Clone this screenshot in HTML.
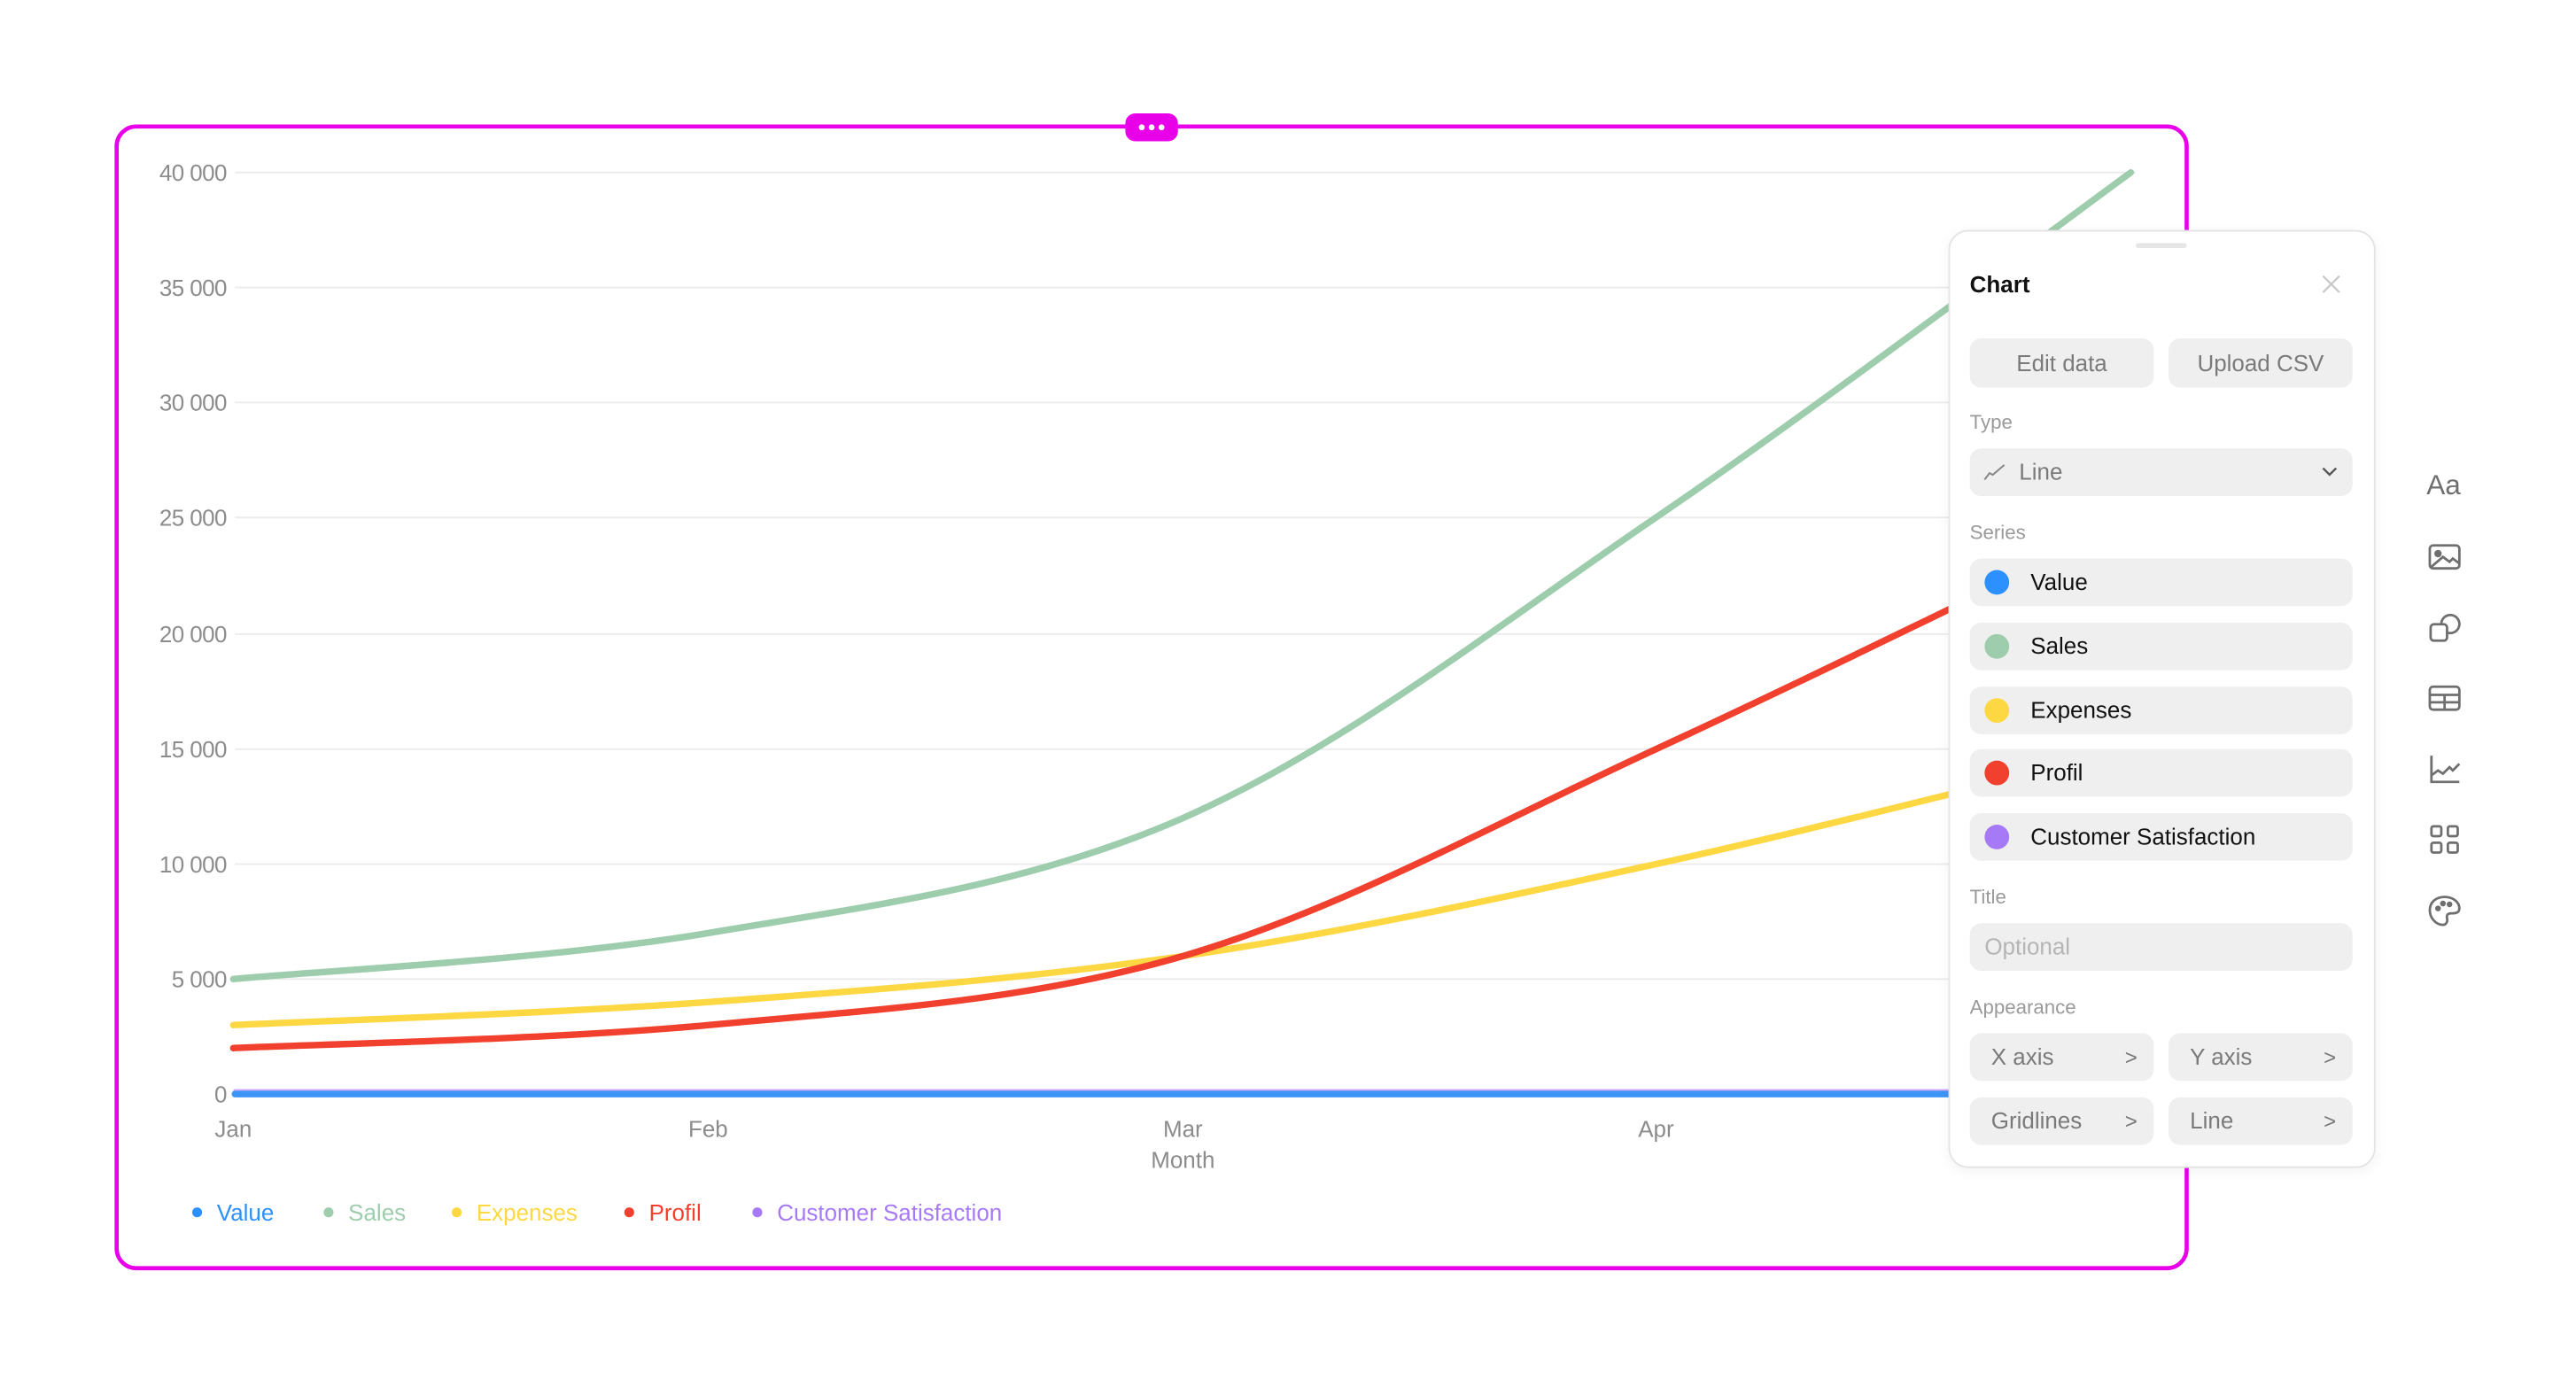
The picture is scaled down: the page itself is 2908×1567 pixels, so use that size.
<!DOCTYPE html>
<html><head><meta charset="utf-8"><style>
html,body{margin:0;padding:0;background:#fff;overflow:hidden}
body{width:2908px;height:1566px}
#w{position:absolute;left:0;top:0;width:1568px;height:845px;transform:scale(1.8546,1.8546);transform-origin:0 0;font-family:"Liberation Sans",sans-serif}
.a{position:absolute}
.yl{position:absolute;right:1430px;font-size:14px;color:#8c8c8c;line-height:16px;letter-spacing:-0.3px}
.xl{position:absolute;font-size:14px;color:#8c8c8c;transform:translateX(-50%)}
.lg{position:absolute;top:730px;font-size:14px}
.lg i{display:inline-block;width:6px;height:6px;border-radius:50%;margin-right:9px;vertical-align:2px}
.btn{position:absolute;background:#efefef;border-radius:7px;height:30px;line-height:30px;font-size:14px;color:#7a7a7a}
.lab{position:absolute;left:1199px;font-size:12px;color:#9a9a9a}
.row{position:absolute;left:1199px;width:233px;height:29px;background:#efefef;border-radius:7px;font-size:14px;color:#111;line-height:29px}
.row i{position:absolute;left:9px;top:7px;width:15px;height:15px;border-radius:50%}
.row span{position:absolute;left:37px}
.chev{position:absolute;right:10px;top:0;font-size:13px;color:#777}
.ic{position:absolute;left:1478px;width:20px;height:20px}
</style></head><body><div id="w">
<svg class="a" style="left:0;top:0" width="1568" height="845">
<g stroke="#ebebeb" stroke-width="1">
<line x1="143" y1="105" x2="1300" y2="105"/><line x1="143" y1="175" x2="1300" y2="175"/><line x1="143" y1="245" x2="1300" y2="245"/><line x1="143" y1="315" x2="1300" y2="315"/><line x1="143" y1="386" x2="1300" y2="386"/><line x1="143" y1="456" x2="1300" y2="456"/><line x1="143" y1="526" x2="1300" y2="526"/><line x1="143" y1="596" x2="1300" y2="596"/>
</g>
<g fill="none" stroke-width="4" stroke-linecap="round">
<path stroke="#9dcdad" d="M142,596 C190,591.3 334.7,584.3 431,568 C527.3,551.7 623.8,540.2 720,498 C816.2,455.8 911.8,380.5 1008,315 C1104.2,249.5 1248.8,140 1297,105"/>
<path stroke="#fdd843" d="M142,624 C190,621.7 334.7,617 431,610 C527.3,603 623.8,596 720,582 C816.2,568 911.8,547 1008,526 C1104.2,505 1248.8,467.7 1297,456"/>
<path stroke="#f2402f" d="M142,638 C190,635.7 334.7,633 431,624 C527.3,615 623.8,610 720,582 C816.2,554 911.8,500.2 1008,456 C1104.2,411.8 1248.8,340.2 1297,317"/>
<line stroke="#c9a8f7" x1="143" y1="664" x2="1297" y2="664" stroke-width="2"/>
<line stroke="#3d95f7" x1="143" y1="666" x2="1297" y2="666"/>
</g>
<rect x="71" y="77" width="1260" height="695" rx="12" fill="none" stroke="#e800e8" stroke-width="2.5"/>
<rect x="685" y="69" width="32" height="17" rx="6" fill="#e800e8"/>
<circle cx="695" cy="77.5" r="1.8" fill="#fff"/><circle cx="701" cy="77.5" r="1.8" fill="#fff"/><circle cx="707" cy="77.5" r="1.8" fill="#fff"/>
</svg>
<div class="yl" style="top:97px">40 000</div><div class="yl" style="top:167px">35 000</div><div class="yl" style="top:237px">30 000</div><div class="yl" style="top:307px">25 000</div><div class="yl" style="top:378px">20 000</div><div class="yl" style="top:448px">15 000</div><div class="yl" style="top:518px">10 000</div><div class="yl" style="top:588px">5 000</div><div class="yl" style="top:658px">0</div>
<div class="xl" style="left:142px;top:679px">Jan</div><div class="xl" style="left:431px;top:679px">Feb</div><div class="xl" style="left:720px;top:679px">Mar</div><div class="xl" style="left:1008px;top:679px">Apr</div><div class="xl" style="left:720px;top:698px">Month</div>
<div class="lg" style="left:117px;color:#2d90ff"><i style="background:#2d90ff"></i>Value</div>
<div class="lg" style="left:197px;color:#9dcdad"><i style="background:#9dcdad"></i>Sales</div>
<div class="lg" style="left:275px;color:#fdd843"><i style="background:#fdd843"></i>Expenses</div>
<div class="lg" style="left:380px;color:#f2402f"><i style="background:#f2402f"></i>Profil</div>
<div class="lg" style="left:458px;color:#a679f7"><i style="background:#a679f7"></i>Customer Satisfaction</div>

<div class="a" style="left:1186px;top:140px;width:258px;height:569px;background:#fff;border:1px solid #e4e4e4;border-radius:12px;box-shadow:0 2px 8px rgba(0,0,0,0.05)"></div>
<div class="a" style="left:1300px;top:148px;width:31px;height:3px;border-radius:2px;background:#e6e6e6"></div>
<div class="a" style="left:1199px;top:165px;font-size:14px;font-weight:bold;color:#111">Chart</div>
<svg class="a" style="left:1413px;top:167px" width="12" height="12"><path d="M1,1L11,11M11,1L1,11" stroke="#c8c8c8" stroke-width="1.2"/></svg>
<div class="btn" style="left:1199px;top:206px;width:112px;text-align:center">Edit data</div>
<div class="btn" style="left:1320px;top:206px;width:112px;text-align:center">Upload CSV</div>
<div class="lab" style="top:250px">Type</div>
<div class="btn" style="left:1199px;top:273px;width:233px;height:29px;line-height:29px"><svg class="a" style="left:8px;top:9px" width="14" height="11"><path d="M1,10 L4,6 L6,7 L13,1" fill="none" stroke="#888" stroke-width="1.1"/></svg><span class="a" style="left:30px">Line</span><svg class="a" style="right:9px;top:11px" width="10" height="7"><path d="M1,1 L5,5 L9,1" fill="none" stroke="#555" stroke-width="1.3"/></svg></div>
<div class="lab" style="top:317px">Series</div>
<div class="row" style="top:340px"><i style="background:#2d90ff"></i><span>Value</span></div>
<div class="row" style="top:379px"><i style="background:#9dcdad"></i><span>Sales</span></div>
<div class="row" style="top:418px"><i style="background:#fdd843"></i><span>Expenses</span></div>
<div class="row" style="top:456px"><i style="background:#f2402f"></i><span>Profil</span></div>
<div class="row" style="top:495px"><i style="background:#a679f7"></i><span>Customer Satisfaction</span></div>
<div class="lab" style="top:539px">Title</div>
<div class="btn" style="left:1199px;top:562px;width:233px;height:29px;line-height:29px;color:#b5b5b5"><span class="a" style="left:9px">Optional</span></div>
<div class="lab" style="top:606px">Appearance</div>
<div class="btn" style="left:1199px;top:629px;width:112px;height:29px;line-height:29px"><span class="a" style="left:13px">X axis</span><span class="chev">&gt;</span></div>
<div class="btn" style="left:1320px;top:629px;width:112px;height:29px;line-height:29px"><span class="a" style="left:13px">Y axis</span><span class="chev">&gt;</span></div>
<div class="btn" style="left:1199px;top:668px;width:112px;height:29px;line-height:29px"><span class="a" style="left:13px">Gridlines</span><span class="chev">&gt;</span></div>
<div class="btn" style="left:1320px;top:668px;width:112px;height:29px;line-height:29px"><span class="a" style="left:13px">Line</span><span class="chev">&gt;</span></div>

<div class="a" style="left:1477px;top:286px;font-size:17px;color:#6f6f6f">Aa</div>
<svg class="ic" style="top:329px" viewBox="0 0 20 20" fill="none" stroke="#6f6f6f" stroke-width="1.5"><rect x="1" y="3" width="18" height="14" rx="2"/><circle cx="6" cy="8" r="1.5" fill="#6f6f6f"/><path d="M2,16 L9,10 L13,13 L15,11 L19,14"/></svg>
<svg class="ic" style="top:372px" viewBox="0 0 20 20" fill="none" stroke="#6f6f6f" stroke-width="1.5"><rect x="1.5" y="8" width="10" height="10" rx="2"/><path d="M8,8 A5.5,5.5 0 1 1 11.5,13"/></svg>
<svg class="ic" style="top:415px" viewBox="0 0 20 20" fill="none" stroke="#6f6f6f" stroke-width="1.5"><rect x="1" y="3" width="18" height="14" rx="2"/><path d="M1,8H19M1,12.5H19M10,8V17"/></svg>
<svg class="ic" style="top:458px" viewBox="0 0 20 20" fill="none" stroke="#6f6f6f" stroke-width="1.5"><path d="M2,2V18H19M2,14 L6,11 L9,13 L13,9 L15,11 L19,7"/></svg>
<svg class="ic" style="top:501px" viewBox="0 0 20 20" fill="none" stroke="#6f6f6f" stroke-width="1.5"><rect x="2" y="2" width="6" height="6" rx="1.2"/><rect x="12" y="2" width="6" height="6" rx="1.2"/><rect x="2" y="12" width="6" height="6" rx="1.2"/><rect x="12" y="12" width="6" height="6" rx="1.2"/></svg>
<svg class="ic" style="top:544px" viewBox="0 0 20 20" fill="none" stroke="#6f6f6f" stroke-width="1.5"><path d="M10,2 C15,2 19,5 19,9 C19,12 16,12 14,12 C12,12 11,13 11.5,15 C12,17 11,19 9,19 C5,19 1,15 1,10 C1,5 5,2 10,2Z"/><circle cx="6" cy="9" r="1" fill="#6f6f6f"/><circle cx="9" cy="6" r="1" fill="#6f6f6f"/><circle cx="13" cy="6.5" r="1" fill="#6f6f6f"/></svg>
</div></body></html>
